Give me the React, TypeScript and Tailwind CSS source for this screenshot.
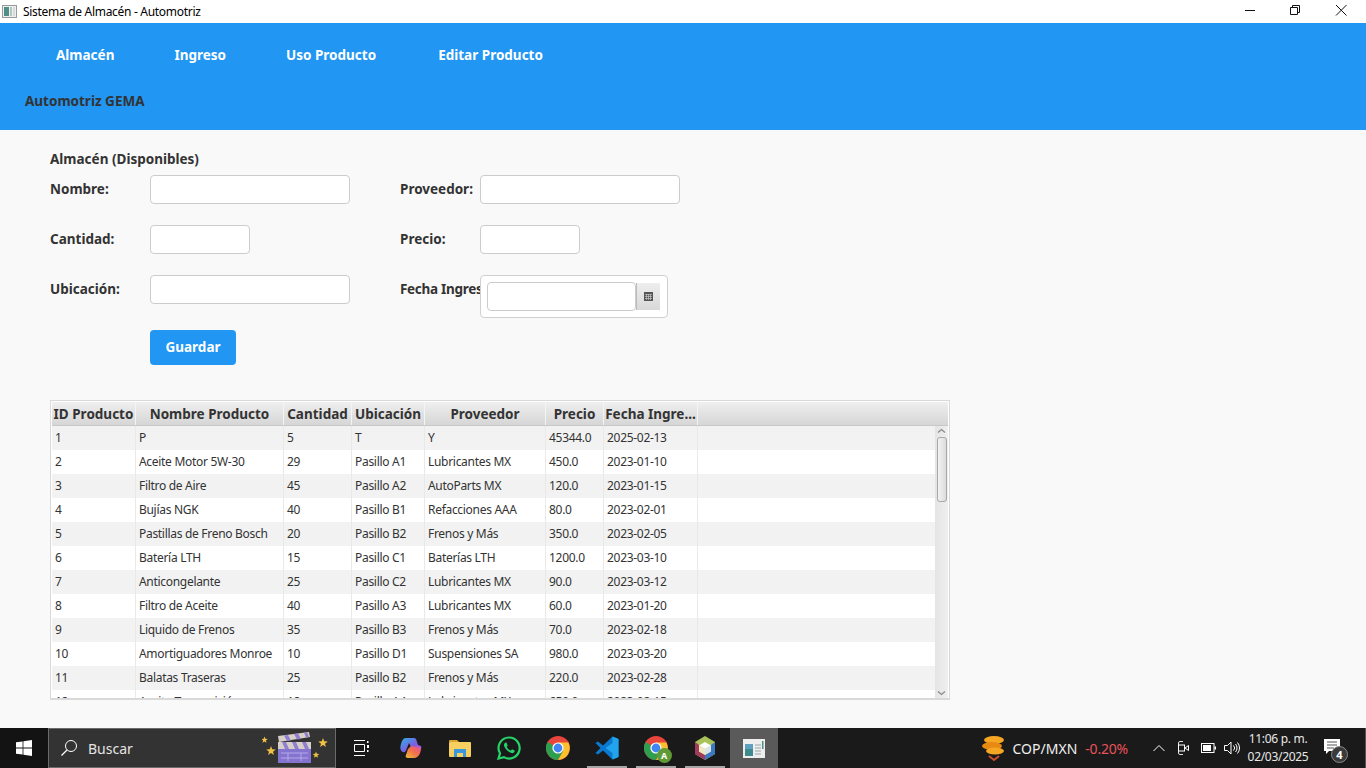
const rows = [
  ["1", "P", "5", "T", "Y", "45344.0", "2025-02-13"],
  ["2", "Aceite Motor 5W-30", "29", "Pasillo A1", "Lubricantes MX", "450.0", "2023-01-10"],
  ["3", "Filtro de Aire", "45", "Pasillo A2", "AutoParts MX", "120.0", "2023-01-15"],
  ["4", "Bujías NGK", "40", "Pasillo B1", "Refacciones AAA", "80.0", "2023-02-01"],
  ["5", "Pastillas de Freno Bosch", "20", "Pasillo B2", "Frenos y Más", "350.0", "2023-02-05"],
  ["6", "Batería LTH", "15", "Pasillo C1", "Baterías LTH", "1200.0", "2023-03-10"],
  ["7", "Anticongelante", "25", "Pasillo C2", "Lubricantes MX", "90.0", "2023-03-12"],
  ["8", "Filtro de Aceite", "40", "Pasillo A3", "Lubricantes MX", "60.0", "2023-01-20"],
  ["9", "Liquido de Frenos", "35", "Pasillo B3", "Frenos y Más", "70.0", "2023-02-18"],
  ["10", "Amortiguadores Monroe", "10", "Pasillo D1", "Suspensiones SA", "980.0", "2023-03-20"],
  ["11", "Balatas Traseras", "25", "Pasillo B2", "Frenos y Más", "220.0", "2023-02-28"],
  ["12", "Aceite Transmisión", "18", "Pasillo A4", "Lubricantes MX", "650.0", "2023-02-15"],
];

const headers = ["ID Producto", "Nombre Producto", "Cantidad", "Ubicación", "Proveedor", "Precio", "Fecha Ingre..."];
const gridCols = "grid grid-cols-[84px_148px_68px_73px_121px_58px_94px_1fr]";

function TitleBar() {
  return (
    <div className="h-[23px] bg-white flex items-center shrink-0">
      <svg className="ml-[2px] w-[15px] h-[15px]" viewBox="0 0 15 15">
        <rect x="0.5" y="1.5" width="14" height="12" fill="#eeeeee" stroke="#9a9a9a" />
        <rect x="2" y="3" width="5" height="9" fill="#4f8f88" />
        <rect x="8" y="3" width="2" height="9" fill="#b8c4c4" />
        <rect x="11" y="3" width="2" height="9" fill="#d6dcdc" />
      </svg>
      <span className="ml-[6px] text-[12px] tracking-[-0.3px] text-black">Sistema de Almacén - Automotriz</span>
      <div className="ml-auto mr-[2px] flex items-center">
        <svg className="w-[46px] h-[23px]" viewBox="0 0 46 23">
          <path d="M19 10.5h10" stroke="#111" fill="none" />
        </svg>
        <svg className="w-[46px] h-[23px]" viewBox="0 0 46 23">
          <path d="M18.500 7.500h7v7h-7z M20.500 7.500v-2h7v7h-2" stroke="#111" fill="none" />
        </svg>
        <svg className="w-[46px] h-[23px]" viewBox="0 0 46 23">
          <path d="M18 5l10.500 10.500M28.500 5L18 15.500" stroke="#111" fill="none" />
        </svg>
      </div>
    </div>
  );
}

function Header() {
  return (
    <header className="h-[107px] bg-[#2196f3] shrink-0 font-bold text-[13.5px]">
      <nav className="flex gap-[60px] pl-[56px] pt-[22px] h-[68px] text-white">
        <span>Almacén</span>
        <span>Ingreso</span>
        <span>Uso Producto</span>
        <span className="ml-[2px]">Editar Producto</span>
      </nav>
      <div className="pl-[25px] text-[#333333]">Automotriz GEMA</div>
    </header>
  );
}

function Form() {
  return (
    <section className="pl-[50px] pt-[20px]">
      <h2 className="font-bold text-[13.5px] text-[#333333] h-[25px] leading-[19px]">Almacén (Disponibles)</h2>
      <div className="grid grid-cols-[100px_250px_80px_1fr] grid-rows-[29px_29px_43px] gap-y-[21px] items-start text-[13.5px] font-bold text-[#333333]">
        <label className="leading-[29px]">Nombre:</label>
        <input className="h-[29px] w-[200px] bg-white border border-[#cccccc] rounded-[4px]" />
        <label className="leading-[29px]">Proveedor:</label>
        <input className="h-[29px] w-[200px] bg-white border border-[#cccccc] rounded-[4px]" />

        <label className="leading-[29px]">Cantidad:</label>
        <input className="h-[29px] w-[100px] bg-white border border-[#cccccc] rounded-[4px]" />
        <label className="leading-[29px]">Precio:</label>
        <input className="h-[29px] w-[100px] bg-white border border-[#cccccc] rounded-[4px]" />

        <label className="leading-[29px]">Ubicación:</label>
        <input className="h-[29px] w-[200px] bg-white border border-[#cccccc] rounded-[4px]" />
        <label className="leading-[29px] tracking-[-0.3px] whitespace-nowrap overflow-hidden">Fecha Ingreso:</label>
        <div className="w-[188px] h-[43px] bg-white border border-[#d0d0d0] rounded-[4px] flex items-start pl-[6px] pt-[6px]">
          <input className="h-[29px] w-[149px] min-w-0 bg-white border border-[#cccccc] rounded-[4px]" />
          <div className="mt-[1px] w-[24px] h-[27px] flex items-center justify-center bg-gradient-to-b from-[#eeeeee] to-[#d8d8d8] border-l border-[#bbbbbb]">
            <svg className="w-[9px] h-[9px]" viewBox="0 0 9 9">
              <rect width="9" height="9" fill="#555555" />
              <path d="M1 2.500h7M1 4.500h7M1 6.500h7M2.500 2v6M4.500 2v6M6.500 2v6" stroke="#cfcfcf" strokeWidth="0.6" />
            </svg>
          </div>
        </div>
      </div>
      <button className="ml-[100px] mt-[12px] block w-[86px] h-[35px] rounded-[4px] bg-[#2196f3] text-white font-bold text-[13.5px]">
        Guardar
      </button>
    </section>
  );
}

function ProductTable() {
  return (
    <div className="relative ml-[50px] mt-[35px] w-[900px] h-[300px] border border-b-2 border-[#d9d9d9] bg-white p-px overflow-hidden text-[#333333]">
      <div className={gridCols + " h-[24px] border-b border-[#c8c8c8] bg-gradient-to-b from-[#efefef] to-[#d6d6d6] font-bold text-[13.5px]"}>
        {headers.map((h) => (
          <div key={h} className="border-r border-[#f4f4f4] text-center leading-[24px] whitespace-nowrap overflow-hidden">
            {h}
          </div>
        ))}
        <div />
      </div>
      {rows.map((row, i) => (
        <div key={row[0]} className={gridCols + " h-[24px] text-[12px] tracking-[-0.3px] " + (i % 2 === 0 ? "bg-[#f2f2f2]" : "bg-white")}>
          {row.map((cell, j) => (
            <div key={j} className="border-r border-[#e9e9e9] pl-[3px] leading-[24px] whitespace-nowrap overflow-hidden">
              {cell}
            </div>
          ))}
          <div />
        </div>
      ))}
      {/* scrollbar */}
      <div className="absolute right-px top-[25px] bottom-0 w-[13px] bg-gradient-to-r from-[#e4e4e4] to-[#efefef] flex flex-col items-center">
        <svg className="w-[9px] h-[11px] shrink-0" viewBox="0 0 9 11">
          <path d="M1 6.500l3.500-3 3.500 3" stroke="#8a8a8a" strokeWidth="1.300" fill="none" />
        </svg>
        <div className="w-[10px] h-[65px] rounded-[3px] border border-[#a8a8a8] bg-gradient-to-r from-[#f2f2f2] to-[#dcdcdc]" />
        <svg className="w-[9px] h-[10px] shrink-0 mt-auto" viewBox="0 0 9 10">
          <path d="M1 3.500l3.500 3 3.500-3" stroke="#8a8a8a" strokeWidth="1.300" fill="none" />
        </svg>
      </div>
    </div>
  );
}

function Star({ x, y, r }: { x: number; y: number; r: number }) {
  const pts = [];
  for (let i = 0; i < 10; i++) {
    const a = (Math.PI / 5) * i - Math.PI / 2;
    const d = i % 2 === 0 ? r : r * 0.42;
    pts.push(`${x + d * Math.cos(a)},${y + d * Math.sin(a)}`);
  }
  return <polygon points={pts.join(" ")} fill="#eec044" />;
}

function SearchArt() {
  return (
    <svg className="w-[68px] h-[36px]" viewBox="0 0 68 36">
      <Star x={2.500} y={10} r={3.500} />
      <Star x={9} y={21} r={5} />
      <Star x={61} y={13} r={5} />
      <Star x={54} y={25} r={3.500} />
      <path d="M16 6l31-4 1 5-31 5z" fill="#d8d0c8" />
      <path d="M22 5.500l4-.5 3 5.500-4 .5zM32 4l4-.5 3 5.500-4 .5zM42 2.800l3-.5 2 4.500-3 .5z" fill="#8f7fd0" />
      <rect x="16" y="12" width="33" height="7" fill="#d8d0c8" />
      <path d="M20 12h4l3 7h-4zM30 12h4l3 7h-4zM40 12h4l3 7h-4z" fill="#8f7fd0" />
      <rect x="16" y="19" width="33" height="14" fill="#8474d0" />
      <path d="M19 23h27M19 28h27M26 23v8M39 23v8" stroke="#b4a8ea" strokeWidth="1" />
    </svg>
  );
}

function Taskbar() {
  return (
    <footer className="mt-auto h-[40px] bg-[#1a1a1a] flex items-stretch shrink-0 text-white relative">
      <div className="w-[48px] flex items-center justify-center bg-[#131313]">
        <svg className="w-[16px] h-[16px]" viewBox="0 0 16 16">
          <path d="M0 2.300l6.600-.9v6.200H0zM7.400 1.300L16 0v7.600H7.400zM0 8.400h6.600v6.200L0 13.700zM7.400 8.400H16V16l-8.600-1.200z" fill="#ffffff" />
        </svg>
      </div>
      <div className="w-[288px] bg-[#333333] border border-[#6b6b6b] flex items-center">
        <svg className="ml-[11px] w-[18px] h-[18px]" viewBox="0 0 18 18">
          <circle cx="11" cy="7" r="5.500" stroke="#ffffff" strokeWidth="1" fill="none" />
          <path d="M7 11l-5.500 5.500" stroke="#ffffff" strokeWidth="1.200" />
        </svg>
        <span className="ml-[10px] text-[14px] text-[#e4e4e4]">Buscar</span>
        <div className="ml-auto mr-[5px] flex items-center">
          <SearchArt />
        </div>
      </div>
      <TaskIcons />
      <Tray />
    </footer>
  );
}

function TaskSlot({ children, running }: { children: React.ReactNode; running?: boolean }) {
  return (
    <div className="relative w-[49px] flex items-center justify-center">
      {children}
      {running ? <div className="absolute bottom-0 left-[5px] right-[4px] h-[2px] bg-[#a6a6a6]" /> : null}
    </div>
  );
}

function ChromeLogo({ size }: { size: number }) {
  return (
    <svg width={size} height={size} viewBox="0 0 24 24">
      <circle cx="12" cy="12" r="12" fill="#e8453c" />
      <path d="M12 12L1.600 6A12 12 0 0 0 12 24l5.200-9z" fill="#2f9e4f" />
      <path d="M12 6.500h10.400A12 12 0 0 1 12 24l5.200-9z" fill="#fbc02d" />
      <circle cx="12" cy="12" r="5.600" fill="#ffffff" />
      <circle cx="12" cy="12" r="4.400" fill="#4285f4" />
    </svg>
  );
}

function TaskIcons() {
  return (
    <div className="flex items-stretch ml-px">
      <TaskSlot>
        <svg className="w-[16px] h-[16px] mr-[2px]" viewBox="0 0 16 16">
          <path d="M1 .5h11M1 15.500h11M1.500 4.500h10v7h-10z" stroke="#ffffff" fill="none" />
          <rect x="14" y="5" width="2.500" height="3" fill="#ffffff" />
          <rect x="14" y="1" width="1.500" height="2" fill="#ffffff" />
          <rect x="14" y="10" width="1.500" height="2" fill="#ffffff" />
        </svg>
      </TaskSlot>
      <TaskSlot>
        <svg className="w-[24px] h-[24px]" viewBox="0 0 24 24">
          <defs>
            <linearGradient id="cp1" x1="0" y1="0" x2="1" y2="1">
              <stop offset="0" stopColor="#2bb5e8" />
              <stop offset="0.55" stopColor="#7a5fe0" />
              <stop offset="1" stopColor="#d55ad0" />
            </linearGradient>
            <linearGradient id="cp2" x1="0" y1="1" x2="1" y2="0">
              <stop offset="0" stopColor="#e8c13a" />
              <stop offset="0.5" stopColor="#f0714a" />
              <stop offset="1" stopColor="#e84f9c" />
            </linearGradient>
          </defs>
          <path d="M7 2h8c2 0 2.500 2 3 4l1 3 3 1c1 3-1 5-3 5h-5L10 7 8 12c-1 3-2 5-4 4-3-1-3-5-2-8 1-3 2-6 5-6z" fill="url(#cp1)" />
          <path d="M9 13l3-3 5 1 5 1c0 4-2 10-7 10H9c-2 0-3-2-2-3l2-6z" fill="url(#cp2)" />
        </svg>
      </TaskSlot>
      <TaskSlot>
        <svg className="w-[22px] h-[18px]" viewBox="0 0 22 18">
          <path d="M0 2a1 1 0 0 1 1-1h7l2 2H0z" fill="#d8a52e" />
          <rect y="3" width="22" height="15" rx="1" fill="#f5cf5f" />
          <path d="M5 10h12v8h-3v-4H8v4H5z" fill="#3a96dd" />
        </svg>
      </TaskSlot>
      <TaskSlot>
        <svg className="w-[24px] h-[24px]" viewBox="0 0 24 24">
          <path d="M12 1.500a10.500 10.500 0 0 0-9 15.800L1.500 22.500l5.400-1.400A10.500 10.500 0 1 0 12 1.500z" fill="none" stroke="#25d366" strokeWidth="2.200" />
          <path d="M8.200 6.800c-.6.400-1.400 1.400-1.200 2.800.300 2 3.700 6.800 7.500 7.500 1.500.200 2.700-.500 3-1.400.200-.6.200-1.100 0-1.300l-2.300-1.200c-.3 0-1 1.200-1.400 1.300-1.400-.3-3.600-2.300-4.100-3.600 0-.4.900-1 1-1.400L9.700 7c-.3-.5-1-.5-1.500-.2z" fill="#25d366" />
        </svg>
      </TaskSlot>
      <TaskSlot>
        <ChromeLogo size={24} />
      </TaskSlot>
      <TaskSlot running>
        <svg className="w-[24px] h-[24px]" viewBox="0 0 24 24">
          <path d="M17.500 0.500L8 9.500 3 5.500 0.500 7l5 5-5 5L3 18.500l5-4 9.500 9 6-2.500V3z" fill="#0b79cf" />
          <path d="M17.500 0.500l6 2.500v18l-6 2.500zM17.500 7L10.500 12l7 5z" fill="#22a3ee" fillRule="evenodd" />
        </svg>
      </TaskSlot>
      <TaskSlot running>
        <div className="relative w-[24px] h-[24px]">
          <ChromeLogo size={24} />
          <div className="absolute right-[-4px] bottom-[-3px] w-[15px] h-[15px] rounded-full bg-[#5f9a35] text-[9px] leading-[15px] text-center text-white font-bold">
            A
          </div>
        </div>
      </TaskSlot>
      <TaskSlot running>
        <svg className="w-[22px] h-[24px]" viewBox="0 0 22 24">
          <path d="M11 0l10 6v12l-10 6-10-6V6z" fill="#a9c25a" />
          <path d="M1 6v12l10 6v-5l-6-3.500V9z" fill="#a33a5c" />
          <path d="M21 6v12l-10 6v-5l6-3.500V9z" fill="#3b79c4" />
          <path d="M11 6l6 3.500-6 3.500-6-3.500z" fill="#ffffff" />
          <path d="M5 9.500l6 3.500v6l-6-3.500z" fill="#f0e6c0" />
          <path d="M17 9.500L11 13v6l6-3.500z" fill="#d8e4ea" />
        </svg>
      </TaskSlot>
      <div className="ml-px w-[48px] bg-[#5a5a5a] flex items-center justify-center">
        <svg className="w-[22px] h-[19px]" viewBox="0 0 22 19">
          <rect width="22" height="19" fill="#eeeeee" />
          <rect x="2" y="5" width="8" height="12" fill="#3f8a8f" />
          <rect x="2" y="5" width="8" height="5" fill="#5fa0c0" />
          <path d="M12 6h6M12 9h6M12 12h6M12 15h6" stroke="#9aa4a4" />
          <rect x="19" y="2" width="1.500" height="8" fill="#4f8f88" />
        </svg>
      </div>
    </div>
  );
}

function Tray() {
  return (
    <div className="ml-auto flex items-center">
      <svg className="w-[24px] h-[28px]" viewBox="0 0 24 28">
        <ellipse cx="12" cy="6" rx="10" ry="4" fill="#f5a623" />
        <ellipse cx="10" cy="12" rx="10" ry="4" fill="#e88a12" />
        <ellipse cx="13" cy="17" rx="9" ry="3.500" fill="#f5a623" />
        <path d="M7 22l5 4 5-4" stroke="#c8502a" strokeWidth="2" fill="none" />
      </svg>
      <span className="ml-[7px] text-[14px] text-[#efefef]">COP/MXN</span>
      <span className="ml-[8px] text-[14px] tracking-[-0.2px] text-[#e8525a]">-0.20%</span>
      <svg className="ml-[25px] w-[12px] h-[8px]" viewBox="0 0 12 8">
        <path d="M.5 7L6 1.500 11.500 7" stroke="#ffffff" fill="none" />
      </svg>
      <svg className="ml-[12px] w-[12px] h-[16px]" viewBox="0 0 12 16">
        <path d="M1.500 5V3a1.500 1.500 0 0 1 1.500-1.500h3M1.500 11v2a1.500 1.500 0 0 0 1.500 1.500h3" stroke="#dddddd" fill="none" />
        <rect x="1.500" y="5" width="6" height="6" stroke="#ffffff" fill="none" />
        <path d="M8 8l3.500-2.500v5z" stroke="#ffffff" fill="none" />
      </svg>
      <svg className="ml-[12px] w-[15px] h-[10px]" viewBox="0 0 15 10">
        <rect x=".5" y=".5" width="12.500" height="9" stroke="#ffffff" fill="none" />
        <rect x="2" y="2" width="8" height="6" fill="#ffffff" />
        <rect x="13.500" y="3.500" width="1.500" height="3" fill="#ffffff" />
      </svg>
      <svg className="ml-[8px] w-[17px] h-[14px]" viewBox="0 0 17 14">
        <path d="M.5 4.500h3L7 1v12L3.500 9.500h-3z" stroke="#ffffff" fill="none" />
        <path d="M9.500 4.500a3.500 3.500 0 0 1 0 5M11.500 3a6 6 0 0 1 0 8M13.500 1.500a8.500 8.500 0 0 1 0 11" stroke="#ffffff" fill="none" />
      </svg>
      <div className="ml-[7px] w-[60px] text-[12px] tracking-[-0.3px] leading-[18px] text-[#e8e8e8] whitespace-nowrap flex flex-col items-center">
        <span>11:06 p. m.</span>
        <span>02/03/2025</span>
      </div>
      <div className="relative ml-[14px] mr-[23px] w-[20px] h-[28px]">
        <svg className="absolute left-[2px] top-[5px] w-[16px] h-[16px]" viewBox="0 0 16 16">
          <path d="M0 0h16v12H5l-3 3v-3H0z" fill="#ffffff" />
          <path d="M3 3h10M3 6h10M3 9h7" stroke="#555555" />
        </svg>
        <div className="absolute left-[9px] top-[12px] w-[17px] h-[17px] rounded-full bg-[#3a3a3a] border border-[#8a8a8a] text-[11px] leading-[15px] text-center font-bold text-white">
          4
        </div>
      </div>
      <div className="w-px h-full bg-[#555555]" />
    </div>
  );
}

export default function App() {
  return (
    <div className="h-screen w-full overflow-hidden flex flex-col bg-[#f9f9f9] font-['Noto_Sans',sans-serif]">
      <TitleBar />
      <Header />
      <Form />
      <ProductTable />
      <Taskbar />
    </div>
  );
}
